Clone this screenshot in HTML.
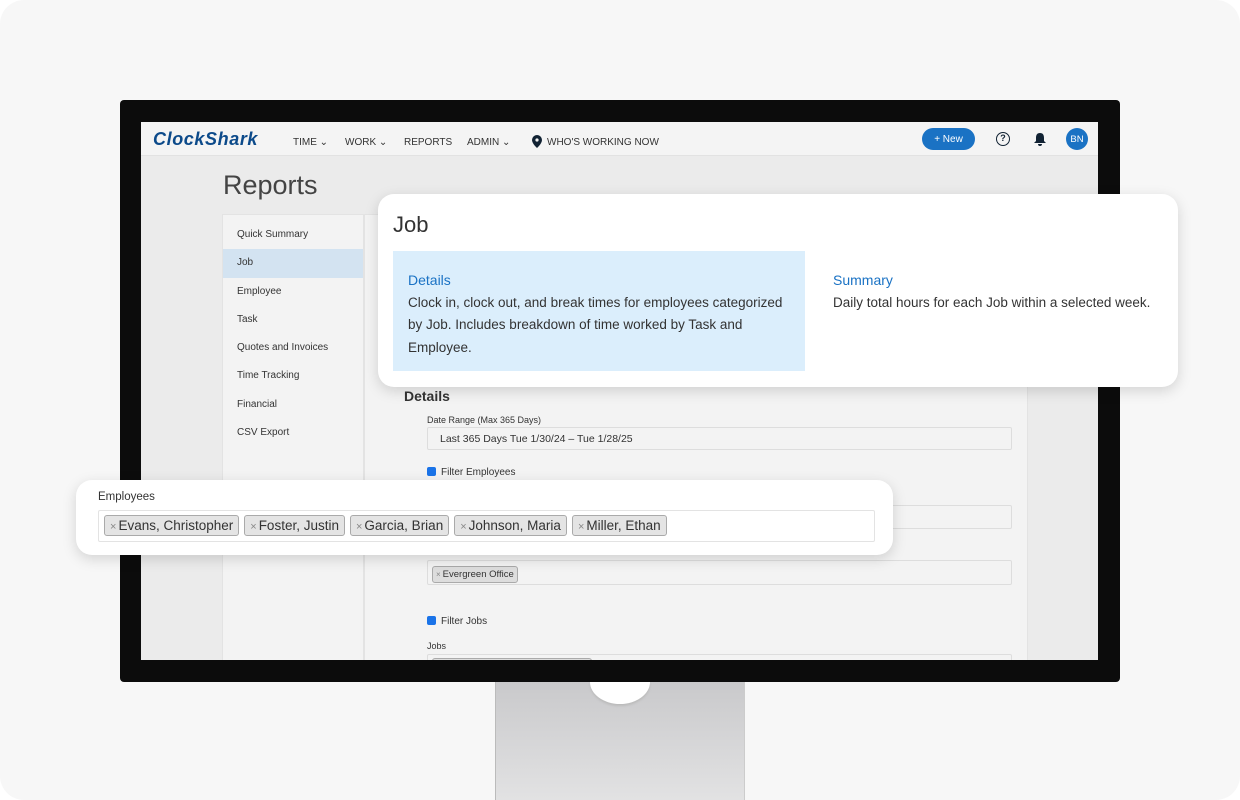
<!DOCTYPE html><html><head><style>
*{box-sizing:border-box;margin:0;padding:0}
body{width:1240px;height:800px;background:#fff;font-family:"Liberation Sans",sans-serif;position:relative;overflow:hidden}
.a{position:absolute}
.bg{left:0;top:0;width:1240px;height:800px;background:#f7f7f7;border-radius:24px}
.stand{left:495px;top:682px;width:250px;height:118px;background:linear-gradient(#c9c9cb,#e2e2e3);border-left:1px solid #bbb;border-right:1px solid #ccc}
.mon{left:120px;top:100px;width:1000px;height:582px;background:#0c0c0c;border-radius:4px}
.scr{left:141px;top:122px;width:957px;height:538px;background:#ebebeb;overflow:hidden}
.nav{left:0;top:0;width:957px;height:34px;background:#f4f4f4;border-bottom:1px solid #e2e2e2;font-size:10px;color:#333}
.nav span{position:absolute;top:15px}
.side{left:81px;top:92px;width:142px;height:460px;background:#f3f3f3;border:1px solid #e3e3e3}
.side div{height:28.3px;line-height:28px;padding-left:14px;font-size:10px;color:#333}
.main{left:223px;top:92px;width:664px;height:460px;background:#f3f3f3;border:1px solid #e3e3e3}
.fld{background:#f3f3f3;border:1px solid #ddd;border-radius:2px}
.sm{font-size:9px;color:#333}
.card{background:#fff;border-radius:16px;box-shadow:0 4px 14px rgba(0,0,0,.15)}
.tag{display:inline-block;background:#e4e4e4;border:1px solid #aaa;border-radius:3px;padding:2px 5px 2px 5px;margin-right:5px;font-size:13.5px;color:#333}
.tag b{font-weight:normal;color:#888;font-size:11px;margin-right:2px}
.cb{display:inline-block;width:9px;height:9px;background:#1a73e8;border-radius:2px;vertical-align:-1px;margin-right:5px}
</style></head><body>
<div class="a bg"></div>
<div class="a stand"></div>
<div class="a mon"></div>
<div class="a scr">
 <div class="a nav">
  <span style="left:12px;top:7px;font-size:18px;font-weight:900;font-style:italic;color:#0c4a8a;letter-spacing:0.6px">ClockShark</span>
  <span style="left:152px">TIME ⌄</span><span style="left:204px">WORK ⌄</span><span style="left:263px">REPORTS</span><span style="left:326px">ADMIN ⌄</span>
  <svg class="a" style="left:391px;top:13px" width="10" height="13" viewBox="0 0 10 13"><path d="M5 0a5 5 0 00-5 5c0 3.5 5 8 5 8s5-4.5 5-8a5 5 0 00-5-5z" fill="#123"/><circle cx="5" cy="5" r="1.6" fill="#f4f4f4"/></svg>
  <span style="left:406px">WHO'S WORKING NOW</span>
  <div class="a" style="left:781px;top:6px;width:53px;height:22px;border-radius:11px;background:#1a72c4;color:#fff;font-size:10px;display:flex;align-items:center;justify-content:center">+ New</div>
  <div class="a" style="left:855px;top:10px;width:14px;height:14px;border:1.6px solid #123;border-radius:50%;font-size:9px;font-weight:bold;text-align:center;line-height:11px;color:#123">?</div>
  <svg class="a" style="left:892px;top:10px" width="14" height="15" viewBox="0 0 14 15"><path d="M7 1c-3 0-4 2-4 5v3l-2 2h12l-2-2V6c0-3-1-5-4-5zM5 12a2 2 0 004 0z" fill="#123"/></svg>
  <div class="a" style="left:925px;top:6px;width:22px;height:22px;border-radius:50%;background:#1a72c4;color:#fff;font-size:9.5px;display:flex;align-items:center;justify-content:center">BN</div>
 </div>
 <div class="a" style="left:82px;top:48px;font-size:27px;color:#444;font-weight:300">Reports</div>
 <div class="a side"><div style="margin-top:6px">Quick Summary</div><div style="background:#d3e3f1">Job</div><div>Employee</div><div>Task</div><div>Quotes and Invoices</div><div>Time Tracking</div><div>Financial</div><div>CSV Export</div></div>
 <div class="a main">
  <div class="a" style="left:39px;top:173px;font-size:14px;font-weight:bold;color:#333">Details</div>
  <div class="a sm" style="left:62px;top:200px">Date Range (Max 365 Days)</div>
  <div class="a fld" style="left:62px;top:212px;width:585px;height:23px;font-size:10.5px;color:#333;padding:5px 0 0 12px">Last 365 Days Tue 1/30/24 – Tue 1/28/25</div>
  <div class="a" style="left:62px;top:252px;font-size:10px;color:#333"><span class="cb"></span>Filter Employees</div>
  <div class="a fld" style="left:62px;top:290px;width:585px;height:24px"></div>
  <div class="a fld" style="left:62px;top:345px;width:585px;height:25px;padding:3px 4px"><span class="tag" style="font-size:9.5px;padding:2px 3px;background:#ddd"><b style="font-size:8px">×</b>Evergreen Office</span></div>
  <div class="a" style="left:62px;top:401px;font-size:10px;color:#333"><span class="cb"></span>Filter Jobs</div>
  <div class="a sm" style="left:62px;top:426px">Jobs</div>
  <div class="a fld" style="left:62px;top:439px;width:585px;height:30px"><div style="margin:3px 4px;width:160px;height:20px;background:#ddd;border:1px solid #aaa;border-radius:3px"></div></div>
 </div>
</div>
<div class="a" style="left:590px;top:682px;width:60px;height:22px;border-radius:0 0 30px 30px/0 0 22px 22px;background:#fff;box-shadow:0 2px 2px #bbb"></div>
<div class="a card" style="left:378px;top:194px;width:800px;height:193px">
 <div class="a" style="left:15px;top:18px;font-size:22px;color:#333;font-weight:300">Job</div>
 <div class="a" style="left:15px;top:57px;width:412px;height:120px;background:#dbeefc;padding:18px 15px;font-size:13.5px;color:#333;line-height:22.5px"><div style="color:#1a72c4;font-size:14px">Details</div>Clock in, clock out, and break times for employees categorized by Job. Includes breakdown of time worked by Task and Employee.</div>
 <div class="a" style="left:455px;top:75px;font-size:13.5px;color:#333;line-height:22.5px"><div style="color:#1a72c4;font-size:14px">Summary</div>Daily total hours for each Job within a selected week.</div>
</div>
<div class="a card" style="left:76px;top:480px;width:817px;height:75px">
 <div class="a" style="left:22px;top:11px;font-size:11.5px;color:#333">Employees</div>
 <div class="a" style="left:22px;top:30px;width:777px;height:32px;border:1px solid #e3e3e3;border-radius:2px;padding:4px 5px"><span class="tag"><b>×</b>Evans, Christopher</span><span class="tag"><b>×</b>Foster, Justin</span><span class="tag"><b>×</b>Garcia, Brian</span><span class="tag"><b>×</b>Johnson, Maria</span><span class="tag"><b>×</b>Miller, Ethan</span></div>
</div>
</body></html>
